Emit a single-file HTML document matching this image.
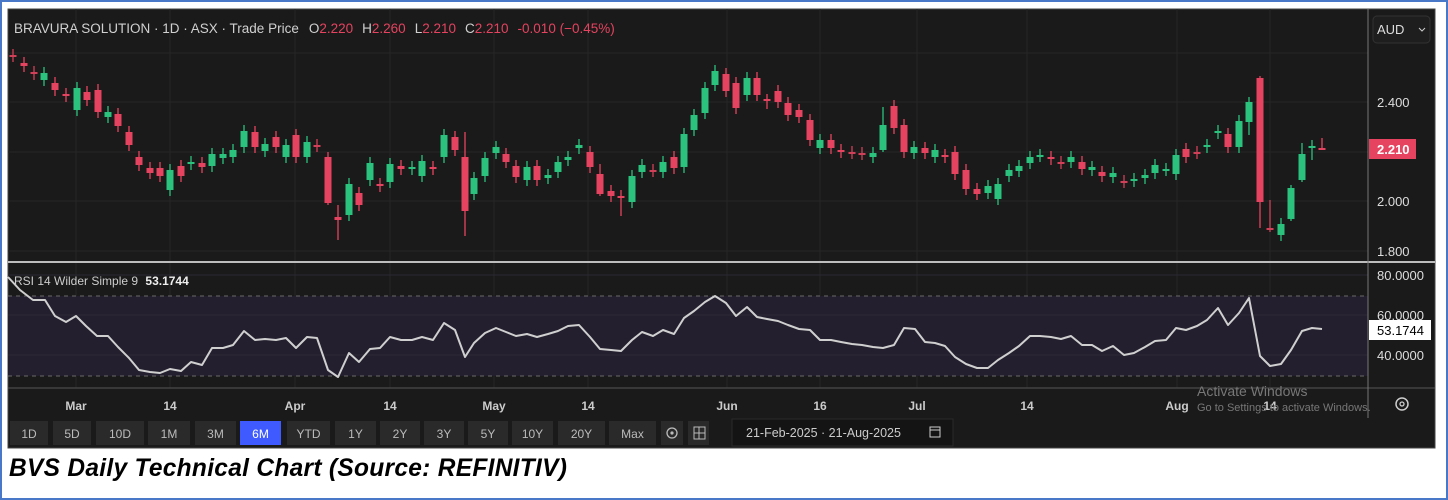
<!DOCTYPE html>
<html><head><meta charset="utf-8"><style>
html,body{margin:0;padding:0;background:#fff;width:1448px;height:500px;overflow:hidden}
#wrap{position:absolute;left:0;top:0;width:1444px;height:496px;border:2px solid #4a78c8;}
svg{position:absolute;left:0;top:0}
.cap{position:absolute;left:9px;top:454px;font:italic bold 25px "Liberation Sans",sans-serif;color:#000;letter-spacing:0.3px;transform:scaleX(0.98);transform-origin:left}
</style></head><body>
<div id="wrap"></div>
<svg id="s" width="1448" height="500" xmlns="http://www.w3.org/2000/svg" font-family="Liberation Sans, sans-serif"></svg>
<div class="cap">BVS Daily Technical Chart (Source: REFINITIV)</div>
<script>
var S=document.getElementById('s');var h='';
h+='<rect x="8" y="9" width="1427" height="439" fill="#1a1a1a"/>';
h+='<rect x="8" y="9" width="1427" height="439" fill="none" stroke="#444" stroke-width="1"/>';
var vx=[76,170,295,390,494,588,727,820,917,1027,1177,1270];
vx.forEach(function(x){h+='<line x1="'+x+'" y1="9" x2="'+x+'" y2="388" stroke="#262626" stroke-width="1"/>';});
[53,102,152,201,251].forEach(function(y){h+='<line x1="8" y1="'+y+'" x2="1368" y2="'+y+'" stroke="#262626"/>';});
h+='<rect x="8" y="296" width="1360" height="80" fill="#241f2e"/>';
[275,315,355].forEach(function(y){h+='<line x1="8" y1="'+y+'" x2="1368" y2="'+y+'" stroke="#2c2836"/>';});
h+='<line x1="8" y1="296" x2="1368" y2="296" stroke="#6a6a6a" stroke-dasharray="4,4"/>';
h+='<line x1="8" y1="376" x2="1368" y2="376" stroke="#6a6a6a" stroke-dasharray="4,4"/>';
h+='<line x1="8" y1="262" x2="1435" y2="262" stroke="#bdbdbd" stroke-width="2"/>';
h+='<line x1="8" y1="388" x2="1435" y2="388" stroke="#555" stroke-width="1"/>';
h+='<line x1="1368" y1="9" x2="1368" y2="418" stroke="#777" stroke-width="1"/>';
var C=[[13,55,56,'c'],[24,63,66,'r'],[34,72,74,'c'],[44,73,80,'g'],[55,83,90,'r'],[66,94,96,'r'],[77,88,110,'g'],[87,92,100,'r'],[98,90,112,'r'],[108,112,117,'g'],[118,114,126,'r'],[129,132,145,'r'],[139,157,165,'r'],[150,168,173,'r'],[160,168,176,'r'],[170,170,190,'g'],[181,166,176,'r'],[191,162,164,'g'],[202,163,167,'r'],[212,154,166,'g'],[223,154,158,'g'],[233,150,157,'g'],[244,131,147,'g'],[255,132,147,'r'],[265,144,151,'g'],[276,137,147,'r'],[286,145,157,'g'],[296,135,157,'r'],[307,142,157,'g'],[317,145,146,'c'],[328,157,203,'r'],[338,217,220,'r'],[349,184,215,'g'],[359,193,205,'r'],[370,163,180,'g'],[380,184,186,'r'],[390,164,182,'g'],[401,166,169,'r'],[412,167,169,'g'],[422,161,176,'g'],[433,167,169,'r'],[444,135,157,'g'],[455,137,150,'r'],[465,157,211,'r'],[474,178,194,'g'],[485,158,176,'g'],[496,147,153,'g'],[506,154,162,'r'],[516,166,177,'r'],[527,167,180,'g'],[537,166,180,'r'],[548,175,178,'g'],[558,162,172,'g'],[568,157,160,'g'],[579,145,148,'g'],[590,152,167,'r'],[600,174,194,'r'],[611,191,196,'r'],[621,196,198,'r'],[632,176,202,'g'],[642,165,172,'g'],[653,170,171,'c'],[663,162,172,'g'],[674,157,168,'r'],[684,134,167,'g'],[694,115,130,'g'],[705,88,113,'g'],[715,71,85,'g'],[726,74,91,'r'],[736,83,108,'r'],[747,78,95,'g'],[757,78,95,'r'],[767,99,101,'r'],[778,91,102,'r'],[788,103,115,'r'],[799,110,117,'r'],[810,120,140,'r'],[820,140,148,'g'],[831,140,148,'r'],[841,150,152,'r'],[852,152,153,'c'],[862,153,154,'c'],[873,153,157,'g'],[883,125,150,'g'],[894,106,128,'r'],[904,125,152,'r'],[914,147,153,'g'],[925,148,153,'r'],[935,150,157,'g'],[945,155,157,'r'],[955,152,174,'r'],[966,170,189,'r'],[977,189,194,'r'],[988,186,193,'g'],[998,184,199,'g'],[1009,170,176,'g'],[1019,166,171,'g'],[1030,157,163,'g'],[1040,155,156,'c'],[1051,157,159,'r'],[1061,162,163,'c'],[1071,157,162,'g'],[1082,162,169,'r'],[1092,167,170,'g'],[1102,172,176,'r'],[1113,173,177,'g'],[1124,181,182,'c'],[1134,179,181,'g'],[1145,175,178,'g'],[1155,165,173,'g'],[1166,169,170,'c'],[1176,155,174,'g'],[1186,149,157,'r'],[1197,152,153,'c'],[1207,145,147,'g'],[1218,131,133,'g'],[1228,134,147,'r'],[1239,121,147,'g'],[1249,102,122,'g'],[1260,78,202,'r'],[1270,228,229,'c'],[1281,224,235,'g'],[1291,188,219,'g'],[1302,154,180,'g'],[1312,146,148,'g'],[1322,148,150,'r']];
var ov={1260:[76,228],1270:[200,232],465:[132,236],338:[205,240],328:[152,205],1291:[185,221],1302:[143,182],1312:[140,160],1322:[138,150],1249:[97,135],600:[164,196],621:[190,216],883:[107,152],767:[94,109]};
C.forEach(function(c){var x=c[0],a=c[1],b=c[2],t=c[3];var col=t=='g'?'#2bc27e':'#e5435f';if(t=='c')col=(c[0]==1040||c[0]==1166)?'#2bc27e':'#d04058';
var w=ov[x]||[a-6,b+6];
h+='<line x1="'+x+'" y1="'+w[0]+'" x2="'+x+'" y2="'+w[1]+'" stroke="'+col+'" stroke-width="1.3"/>';
var hh=Math.max(b-a,2);h+='<rect x="'+(x-3.5)+'" y="'+a+'" width="7" height="'+hh+'" fill="'+col+'"/>';});
var R=[[8,277],[20,290],[33,300],[45,300],[55,316],[66,322],[76,316],[86,326],[97,336],[108,336],[118,347],[129,358],[139,370],[150,372],[160,373],[170,369],[181,371],[191,362],[202,365],[212,348],[223,348],[233,345],[244,331],[255,340],[265,339],[276,340],[286,338],[296,348],[307,337],[317,338],[328,370],[338,377],[349,353],[359,362],[370,349],[380,348],[390,337],[401,340],[412,340],[422,337],[433,340],[444,323],[455,330],[465,357],[474,343],[485,333],[496,328],[506,332],[516,336],[527,334],[537,337],[548,334],[558,331],[568,326],[579,325],[590,337],[600,349],[611,350],[621,351],[632,340],[642,332],[653,336],[663,330],[674,334],[684,318],[694,311],[705,302],[715,296],[726,303],[736,316],[747,307],[757,317],[767,319],[778,321],[788,325],[799,329],[810,330],[820,340],[831,340],[841,342],[852,344],[862,345],[873,347],[883,348],[894,345],[904,328],[915,329],[925,342],[935,343],[945,346],[955,357],[966,364],[977,368],[988,368],[998,360],[1009,353],[1019,346],[1030,336],[1040,336],[1051,337],[1061,339],[1071,336],[1082,345],[1092,345],[1102,351],[1113,346],[1124,355],[1134,353],[1145,347],[1155,341],[1166,340],[1176,328],[1186,330],[1197,326],[1207,320],[1218,308],[1228,325],[1239,313],[1249,298],[1260,356],[1270,366],[1281,364],[1291,350],[1302,331],[1312,328],[1322,329]];
h+='<polyline fill="none" stroke="#cfcfcf" stroke-width="2" stroke-linejoin="round" points="'+R.map(function(p){return p.join(',')}).join(' ')+'"/>';
h+='<text x="14" y="33" font-size="13.5" fill="#d0d0d0">BRAVURA SOLUTION · 1D · ASX · Trade Price<tspan dx="10">O</tspan><tspan fill="#e5435f">2.220</tspan><tspan dx="9">H</tspan><tspan fill="#e5435f">2.260</tspan><tspan dx="9">L</tspan><tspan fill="#e5435f">2.210</tspan><tspan dx="9">C</tspan><tspan fill="#e5435f">2.210</tspan><tspan dx="9" fill="#e5435f">-0.010 (−0.45%)</tspan></text>';
h+='<rect x="1373" y="16" width="57" height="27" rx="4" fill="#1e1e1e" stroke="#333"/><text x="1377" y="34" font-size="13" fill="#ddd">AUD</text><path d="M1419 28 l3 3 l3 -3" stroke="#ccc" fill="none"/>';
[["2.400",107],["2.000",206],["1.800",256]].forEach(function(p){h+='<text x="1377" y="'+p[1]+'" font-size="13" fill="#ddd">'+p[0]+'</text>';});
h+='<rect x="1369" y="139" width="47" height="20" fill="#e5435f"/><text x="1377" y="154" font-size="13" fill="#fff" font-weight="bold">2.210</text>';
[["80.0000",280],["60.0000",320],["40.0000",360]].forEach(function(p){h+='<text x="1377" y="'+p[1]+'" font-size="13" fill="#ddd">'+p[0]+'</text>';});
h+='<rect x="1369" y="320" width="62" height="20" fill="#fff"/><text x="1377" y="335" font-size="13" fill="#000">53.1744</text>';
h+='<text x="14" y="285" font-size="12" fill="#ccc">RSI 14 Wilder Simple 9 <tspan font-weight="bold" fill="#eee" dx="4">53.1744</tspan></text>';
[["Mar",76],["14",170],["Apr",295],["14",390],["May",494],["14",588],["Jun",727],["16",820],["Jul",917],["14",1027],["Aug",1177],["14",1270]].forEach(function(p){h+='<text x="'+p[1]+'" y="410" font-size="12" font-weight="bold" fill="#ccc" text-anchor="middle">'+p[0]+'</text>';});
h+='<text x="1197" y="396" font-size="14" fill="#777">Activate Windows</text><text x="1197" y="411" font-size="11" fill="#777">Go to Settings to activate Windows.</text>';
h+='<circle cx="1402" cy="404" r="6" fill="none" stroke="#ccc" stroke-width="1.5"/><circle cx="1402" cy="404" r="2" fill="none" stroke="#ccc" stroke-width="1.3"/>';
var B=[["1D",10,50],["5D",53,93],["10D",96,146],["1M",148,192],["3M",195,238],["6M",240,283],["YTD",287,332],["1Y",335,378],["2Y",380,422],["3Y",424,466],["5Y",468,510],["10Y",512,555],["20Y",558,607],["Max",609,658],["",661,685],["",688,711]];
B.forEach(function(b){var on=b[0]=="6M";h+='<rect x="'+b[1]+'" y="421" width="'+(b[2]-b[1]-2)+'" height="24" fill="'+(on?'#3f5bff':'#2a2a2a')+'"/>';if(b[0])h+='<text x="'+((b[1]+b[2]-2)/2)+'" y="438" font-size="12" fill="'+(on?'#fff':'#bbb')+'" text-anchor="middle">'+b[0]+'</text>';});
h+='<circle cx="672" cy="433" r="5" fill="none" stroke="#bbb" stroke-width="1.3"/><circle cx="672" cy="433" r="1.6" fill="#bbb"/>';
h+='<rect x="694" y="427" width="11" height="12" fill="none" stroke="#bbb"/><line x1="699" y1="427" x2="699" y2="439" stroke="#bbb"/><line x1="694" y1="433" x2="705" y2="433" stroke="#bbb"/>';
h+='<rect x="732" y="419" width="221" height="27" fill="#141414" stroke="#2a2a2a"/><text x="746" y="437" font-size="12.5" fill="#ccc">21-Feb-2025  ·  21-Aug-2025</text>';
h+='<rect x="930" y="427" width="10" height="10" fill="none" stroke="#ccc"/><line x1="930" y1="430" x2="940" y2="430" stroke="#ccc"/>';
S.innerHTML=h;
</script>
</body></html>
